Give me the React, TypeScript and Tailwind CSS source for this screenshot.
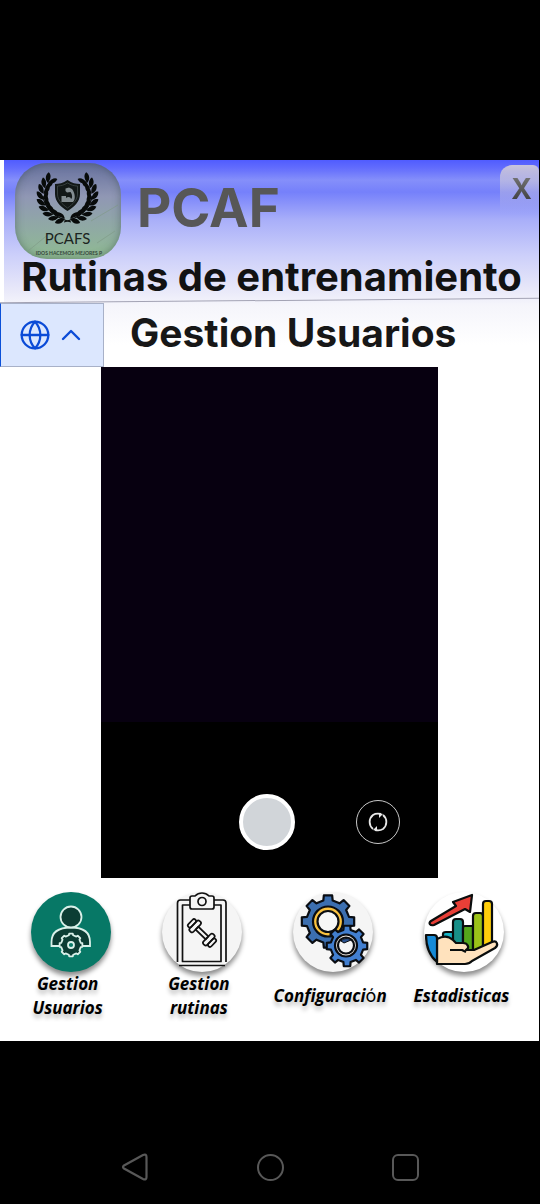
import type { ReactNode } from "react";
import { ChevronUp, Globe } from "lucide-react";

function gearPath(cx: number, cy: number, outer: number, inner: number, teeth: number) {
  const points: string[] = [];
  const step = (Math.PI * 2) / teeth;
  for (let i = 0; i < teeth; i++) {
    const a = i * step - Math.PI / 2;
    const corners: [number, number][] = [
      [-0.28, inner],
      [-0.2, outer],
      [0.2, outer],
      [0.28, inner],
    ];
    for (const [offset, r] of corners) {
      const t = a + offset * step;
      points.push(`${(cx + Math.cos(t) * r).toFixed(2)} ${(cy + Math.sin(t) * r).toFixed(2)}`);
    }
  }
  return `M${points.join("L")}Z`;
}

function Laurel() {
  const leaves = [];
  for (let i = 0; i < 9; i++) {
    const deg = 98 + i * 15;
    const t = (deg * Math.PI) / 180;
    const x = 52 + Math.cos(t) * 23.5;
    const y = 33 + Math.sin(t) * 22.5;
    leaves.push(
      <g key={i} transform={`translate(${x} ${y}) rotate(${deg + 90})`}>
        <path d="M-1 0C0-5 4-7 8-6C8-3 5 0 -1 0Z" />
        <path d="M-1 0C0 4 4 6 8 5C8 2 4 0 -1 0Z" />
      </g>,
    );
  }
  return (
    <g fill="#080b0a">
      {leaves}
      <path d="M56 59C41 55 30 47 28 33" fill="none" stroke="#080b0a" strokeWidth="1.2" />
    </g>
  );
}

function Logo() {
  return (
    <div className="h-24 w-[106px] shrink-0 overflow-hidden rounded-[32px] bg-linear-to-b from-[#66709d] via-[#9097b4] via-35% to-[#8fbb91] shadow-[inset_0_0_8px_rgba(40,60,60,0.45)]">
      <svg viewBox="0 0 106 96" className="block h-full w-full" role="img" aria-label="PCAFS">
        <Laurel />
        <g transform="translate(105 0) scale(-1 1)">
          <Laurel />
        </g>
        <path d="M52.500 17C57 20 61 21 65 21V31C65 39 59 44 52.500 48C46 44 40 39 40 31V21C44 21 48 20 52.500 17Z" fill="#121817" />
        <path d="M52.500 20C56 22 59 23 62.500 23V31C62.500 37 58 41 52.500 45C47 41 42.500 37 42.500 31V23C46 23 49 22 52.500 20Z" fill="none" stroke="#46504f" strokeWidth="0.7" />
        <path d="M46.500 39V33H51V35C53 33 56 34 56 36C58 35 57 31 55.500 29L52 29.500L50.500 28V25.500L54 24.500L57 26C60 30 61 36 58 39Z" fill="#838d91" />
        <path d="M13 88L35 70M76 58L103 42M82 80L100 68" stroke="#7d9885" strokeWidth="0.6" />
        <text x="52.500" y="81" textAnchor="middle" className="font-['Lato',sans-serif] text-[15px]" fill="#1b2420">PCAFS</text>
        <text x="54" y="92" textAnchor="middle" className="font-['Lato',sans-serif] text-[5px] font-bold" fill="#34463a">IDOS HACEMOS MEJORES P</text>
      </svg>
    </div>
  );
}

function UserIcon() {
  return (
    <svg viewBox="0 0 80 80" className="block h-full w-full" aria-hidden="true">
      <g stroke="#d9f0e9" strokeWidth="1.8">
        <path d="M20.500 54V50C20.500 39 29 35.500 40 35.500S59 39 59 50V54Z" fill="#0c3d34" />
        <circle cx="40" cy="25" r="10.500" fill="#0c3d34" />
        <path d={gearPath(40, 53, 11.5, 10, 8)} fill="#0c3d34" strokeLinejoin="round" />
        <circle cx="40" cy="53" r="3" fill="#087866" />
      </g>
    </svg>
  );
}

function ClipboardIcon() {
  return (
    <svg viewBox="0 0 80 80" className="block h-full w-full overflow-visible" aria-hidden="true">
      <g fill="none" stroke="#111" strokeWidth="1.7" strokeLinejoin="round">
        <path d="M15.500 70V11Q15.500 8 18.500 8H61Q64 8 64 11V70M17 73.500H63" />
        <path d="M20.500 13H59V69.500H20.500Z" />
        <path d="M28 6Q28 4 30 4H33Q36 1 40 1T47 4H50Q52 4 52 6V15Q52 17 50 17H30Q28 17 28 15Z" fill="#f6f6f6" />
        <circle cx="40" cy="9.500" r="4" />
        <g transform="translate(40 41) rotate(44)">
          <path d="M-7-2H7V2H-7Z" />
          <rect x="-12" y="-7" width="5" height="14" rx="2" />
          <rect x="-16" y="-5" width="4" height="10" rx="2" />
          <rect x="7" y="-7" width="5" height="14" rx="2" />
          <rect x="12" y="-5" width="4" height="10" rx="2" />
        </g>
      </g>
    </svg>
  );
}

function GearsIcon() {
  return (
    <svg viewBox="0 0 80 80" className="block h-full w-full overflow-visible" aria-hidden="true">
      <g stroke="#0a0d12" strokeWidth="2.200" strokeLinejoin="round">
        <path d={gearPath(35, 29.5, 26.5, 21.5, 8)} fill="#3c6fb0" />
        <circle cx="35" cy="29.500" r="15" fill="#fbc340" />
        <circle cx="35" cy="29.500" r="10.500" fill="#f6f6f6" />
        <path d={gearPath(54, 54, 20.5, 16.5, 8)} fill="#427fd0" />
        <circle cx="53" cy="53.500" r="11" fill="#f1e9e1" />
        <circle cx="53" cy="53.500" r="8" fill="#f6f6f6" />
        <path d="M48 49L51 51L58 48C55 46 51 46 48 49Z" fill="#2c5390" strokeWidth="1" />
      </g>
    </svg>
  );
}

function StatsIcon() {
  return (
    <svg viewBox="0 0 80 80" className="block h-full w-full overflow-visible" aria-hidden="true">
      <g stroke="#0a0d0d" strokeWidth="2.200" strokeLinejoin="round">
        <path d="M19 57V42Q19 40 22 40H30V57Z" fill="#16b3c5" />
        <path d="M29 56V30Q29 27 32 27H36Q39 27 39 30V58H29Z" fill="#188f88" />
        <path d="M39 58V36Q39 34 41 34H49V60H39Z" fill="#54a61b" />
        <path d="M49 60V24Q49 21 52 21H56Q59 21 59 24V58L49 60Z" fill="#9bc219" />
        <path d="M59 57V12Q59 9 62 9H65Q68 9 68 12V50L59 57Z" fill="#ffce0b" />
        <path d="M7 29L32 14L29 10L48 3L46 20L41 17L10 33C6 34 4 31 7 29Z" fill="#e83f37" />
        <path d="M13 47C20 43 25 44 29 48L32 51H39C44 51 46 56 42 58H50L68 50C73 48 75 53 71 56L48 69C46 71 44 72 41 72H13Z" fill="#ffe2bd" />
        <path d="M2 43H10Q13 43 13 46V70C7 65 2 56 2 43Z" fill="#168ad6" />
        <path d="M26 58H38L42 60" fill="none" />
      </g>
    </svg>
  );
}

function NavItem({ icon, children, tone = "bg-[#f5f5f5]" }: { icon: ReactNode; children: ReactNode; tone?: string }) {
  return (
    <button type="button" className="flex flex-col items-center">
      <span className={`block size-20 rounded-full shadow-[0_4px_5px_rgba(0,0,0,0.45)] ${tone}`}>{icon}</span>
      <span className="flex h-12 items-center pr-1.5 text-center font-['Open_Sans',sans-serif] text-[17px] leading-6 font-bold whitespace-nowrap text-black italic [text-shadow:0_4px_4px_rgba(0,0,0,0.25)]">
        <span>{children}</span>
      </span>
    </button>
  );
}

export default function App() {
  return (
    <div className="min-h-screen bg-black font-['Inter',sans-serif]">
      <div className="h-40" />
      <main className="border-r border-black bg-white">
        <div className="relative">
          <div className="absolute inset-y-0 right-0 left-1 bg-[linear-gradient(to_bottom,#505cff_0px,#626cfd_8px,#858ffa_20px,#7580fb_32px,#a9aff9_60px,#cccffa_95px,#e7e7f9_128px,#f5f5fb_145px,#ffffff_185px)]" />
          <header className="relative pb-2">
            <div className="flex items-start gap-4 pt-[3px] pl-[15px]">
              <Logo />
              <h1 className="pt-[13px] text-[53px] leading-16 font-bold text-[#575757]">PCAF</h1>
              <button
                type="button"
                aria-label="Cerrar"
                className="mt-[2px] ml-auto h-12 w-[39px] rounded-tl-xl rounded-tr-md bg-linear-to-b from-[#c9c5db] to-transparent"
              >
                <span className="block bg-linear-to-b from-[#858585] to-[#303030] bg-clip-text pl-1 text-[28px] leading-10 font-bold text-transparent">X</span>
              </button>
            </div>
            <h2 className="pl-1 text-center text-[40px] leading-9 font-bold whitespace-nowrap text-[#121212]">Rutinas de entrenamiento</h2>
            <div className="absolute inset-x-0 bottom-[2px] h-px -skew-y-[0.5deg] bg-[#a3a3b4]" />
          </header>
          <div className="relative flex h-16">
            <button
              type="button"
              aria-label="Idioma"
              className="flex w-26 items-center gap-1 border border-[#a8b1c8] border-l-[#0b50d8] bg-[#dce7fe] pl-[18px] text-[#0b4bd7]"
            >
              <Globe size={32} strokeWidth={1.7} />
              <ChevronUp size={32} strokeWidth={1.8} />
            </button>
            <h3 className="flex-1 pt-2 pl-[26px] text-[39px] leading-11 font-bold whitespace-nowrap text-[#171717]">Gestion Usuarios</h3>
          </div>
        </div>

        <section aria-label="Cámara" className="mx-auto w-[62.4%] bg-black">
          <div className="h-[355px] bg-[#070010]" />
          <div className="grid h-39 grid-cols-3 items-center pt-11 pr-1">
            <button
              type="button"
              aria-label="Tomar foto"
              className="col-start-2 size-14 justify-self-center rounded-full border-4 border-white bg-[#d1d5d9]"
            />
            <button
              type="button"
              aria-label="Cambiar cámara"
              className="flex size-11 items-center justify-center justify-self-center rounded-full border border-[#c8c8c8]"
            >
              <svg viewBox="0 0 24 24" className="size-6" fill="none" stroke="#e8e8e8" strokeWidth="1.8" aria-hidden="true">
                <path d="M7 19A9 9 0 0 1 7 5Q10 3 15 4M17 5A9 9 0 0 1 17 19Q14 21 9 20" />
                <path d="M13 3V8L17 4ZM11 21V16L7 20Z" fill="#e8e8e8" stroke="none" />
              </svg>
            </button>
          </div>
        </section>

        <nav aria-label="Principal" className="grid grid-cols-4 pt-[14px] pr-[9px] pb-[21px] pl-[5px]">
          <NavItem icon={<UserIcon />} tone="bg-[#077866]">
            Gestion
            <br />
            Usuarios
          </NavItem>
          <NavItem icon={<ClipboardIcon />}>
            Gestion
            <br />
            rutinas
          </NavItem>
          <NavItem icon={<GearsIcon />}>
            Configuraci<span className="font-['Inter',sans-serif] text-lg leading-6 font-normal not-italic">ó</span>n
          </NavItem>
          <NavItem icon={<StatsIcon />} tone="bg-white">Estadisticas</NavItem>
        </nav>
      </main>

      <footer className="grid grid-cols-3 items-center justify-items-center px-[12.5%] pt-[112px] pb-[22px]">
        <button type="button" aria-label="Atrás">
          <svg viewBox="0 0 28 28" className="size-7" fill="none" stroke="#585858" strokeWidth="2.200">
            <path d="M3 12.500L22 2Q25.500 0.500 25.500 4V24Q25.500 27.500 22 26L3 15.500Q1 14 3 12.500Z" />
          </svg>
        </button>
        <button type="button" aria-label="Inicio" className="size-[27px] rounded-full border-2 border-[#585858]" />
        <button type="button" aria-label="Recientes" className="size-[27px] rounded-md border-2 border-[#585858]" />
      </footer>
    </div>
  );
}
